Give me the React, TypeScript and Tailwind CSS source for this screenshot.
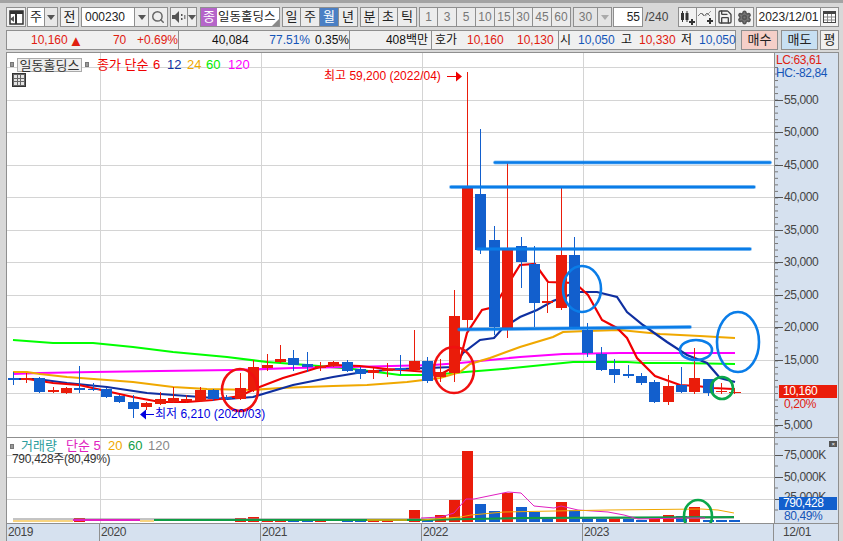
import React from "react";
import { Search, Save, Settings } from "lucide-react";

const RED = "#ea1c0a";
const BLUE = "#125fcd";

// [open-close top, bottom, wick top, wick bottom, color] in page pixels
const candles: [number, number, number, number, string][] = [
  [378, 380, 372, 385, BLUE], [378, 380, 373, 383, RED], [378, 392, 377, 393, BLUE], [390, 392, 387, 393, RED],
  [388, 393, 387, 394, RED], [388, 390, 366, 393, BLUE], [389, 390, 383, 391, BLUE], [389, 397, 388, 398, BLUE],
  [396, 402, 395, 403, BLUE], [402, 409, 395, 418, BLUE], [403, 407, 402, 410, RED], [399, 404, 392, 405, RED],
  [398, 402, 387, 403, RED], [399, 401, 395, 403, RED], [390, 401, 387, 402, RED], [390, 399, 389, 401, BLUE],
  [397, 399, 395, 400, BLUE], [388, 399, 373, 400, RED], [367, 390, 360, 392, RED], [365, 368, 354, 371, RED],
  [359, 362, 345, 363, RED], [358, 365, 350, 371, BLUE], [364, 367, 352, 372, BLUE], [366, 368, 362, 371, RED],
  [362, 366, 361, 367, RED], [362, 371, 360, 372, BLUE], [369, 374, 367, 379, BLUE], [370, 373, 368, 379, RED],
  [369, 371, 363, 377, RED], [368, 370, 355, 375, BLUE], [361, 370, 330, 371, RED], [361, 381, 357, 383, BLUE],
  [372, 377, 359, 382, RED], [316, 373, 290, 382, RED], [188, 320, 72, 332, RED], [194, 250, 129, 254, BLUE],
  [240, 327, 226, 335, BLUE], [250, 328, 163, 338, RED], [246, 262, 237, 288, BLUE], [264, 303, 246, 327, BLUE],
  [301, 303, 283, 313, RED], [255, 308, 188, 310, RED], [255, 327, 237, 328, BLUE], [330, 353, 323, 357, BLUE],
  [354, 370, 347, 371, BLUE], [369, 375, 359, 383, BLUE], [374, 376, 365, 378, BLUE], [376, 383, 373, 385, BLUE],
  [382, 402, 380, 403, BLUE], [386, 402, 375, 405, RED], [385, 392, 367, 393, BLUE], [378, 392, 348, 394, RED],
  [379, 393, 379, 396, BLUE], [391, 392, 383, 394, RED], [392, 393, 388, 394, RED],
];
const cx = (i: number) => Math.floor(13 + 13.37 * i);

const ma6 = "28,379 53,383 66,384 79,385 106,391 133,397 160,402 187,402 213,400 240,396 257,388 283,378 307,371 320,367 334,365 360,366 387,369 401,370 428,372 441,374 454,367 460,360 467,333 482,310 494,307 500,297 520,265 535,264 548,282 575,283 588,295 602,320 617,328 627,338 637,358 655,376 680,385 697,386 713,388 733,389";
const ma12 = "17,379 37,379 67,383 107,387 147,393 187,396 227,399 253,397 283,388 293,385 333,377 363,372 400,369 428,368 453,367 463,353 480,340 494,338 503,328 520,317 537,310 553,301 577,292 597,292 617,297 627,312 643,325 667,342 687,355 707,363 720,378 735,382";
const ma24 = "13,372 27,372 40,374 67,377 107,380 133,382 173,387 207,389 253,390 280,388 333,386 367,385 407,382 440,378 460,372 470,364 490,358 520,347 553,337 563,332 587,331 620,330 660,334 700,336 717,337 735,338";
const ma60 = "13,340 53,343 93,343 133,347 173,352 227,357 267,362 307,365 353,369 400,375 433,375 453,373 503,369 553,364 573,362 627,362 643,363 680,363 735,364";
const ma120 = "13,374 40,373 93,372 160,371 233,370 293,368 350,367 433,365 460,363 520,357 563,354 620,353 735,353";

// volume bars: index -> [top y, color]
const volBars: Record<number, [number, string]> = {
  5: [518, RED], 17: [518, RED], 18: [517, RED], 30: [510, RED], 31: [519, BLUE], 32: [515, RED], 33: [500, RED],
  34: [451, RED], 35: [504, BLUE], 36: [511, BLUE], 37: [493, RED], 38: [507, BLUE], 39: [512, BLUE], 40: [518, BLUE],
  41: [502, RED], 42: [510, BLUE], 43: [517, BLUE], 44: [519, BLUE], 45: [518, RED], 46: [519, BLUE], 47: [520, BLUE],
  48: [519, RED], 49: [515, RED], 50: [516, BLUE], 51: [507, RED], 52: [520, BLUE], 53: [520, BLUE], 54: [520, BLUE],
};

const priceTicks = [
  ["55,000", 100], ["50,000", 132], ["45,000", 165], ["40,000", 197], ["35,000", 230], ["30,000", 262],
  ["25,000", 295], ["20,000", 327], ["15,000", 360], ["5,000", 425],
] as const;

const FONT = "font-['Liberation_Sans','Noto_Sans_CJK_KR',sans-serif]";

function Btn({ w, children, className = "" }: { w: string; children?: React.ReactNode; className?: string }) {
  return (
    <div className={`${w} h-[20px] shrink-0 flex items-center justify-center border border-[#8f8f8f] text-[13px] text-[#222] ${className}`}>
      {children}
    </div>
  );
}

function Arrow({ color = "#555" }: { color?: string }) {
  return (
    <svg width="8" height="5" viewBox="0 0 8 5">
      <path d="M0 0h8L4 5z" fill={color} />
    </svg>
  );
}

function Toolbar() {
  return (
    <div className="flex items-center h-[20px] mt-[4px] pl-[6px]">
      <Btn w="w-[20px]" className="bg-[#f2f2f2]">
        <svg width="15" height="15" viewBox="0 0 15 15">
          <rect x="1" y="1" width="13" height="13" fill="#fff" stroke="#333" strokeWidth="1.5" />
          <rect x="1" y="1" width="13" height="3" fill="#333" />
          <rect x="6" y="4" width="2" height="10" fill="#333" />
          <path d="M5 6v6L1 9z" fill="#555" />
        </svg>
      </Btn>
      <Btn w="w-[18px]" className="ml-[1px] bg-white">주</Btn>
      <Btn w="w-[13px]" className="bg-[#e8e8e8] border-l-0"><Arrow /></Btn>
      <Btn w="w-[19px]" className="ml-[2px] bg-[#f2f2f2]">전</Btn>
      <Btn w="w-[54px]" className="ml-[2px] bg-white !justify-start pl-[3px] !text-[12px]">000230</Btn>
      <Btn w="w-[14px]" className="bg-[#eee] border-l-0"><Arrow /></Btn>
      <Btn w="w-[19px]" className="bg-[#eee] border-l-0"><Search size={14} color="#666" strokeWidth={2.5} /></Btn>
      <Btn w="w-[18px]" className="ml-[2px] bg-[#eee]">
        <svg width="14" height="12" viewBox="0 0 14 12">
          <path d="M0 4h3l4-4v12L3 8H0z" fill="#555" />
          <rect x="9" y="3" width="1.5" height="2" fill="#555" /><rect x="9" y="7" width="1.5" height="2" fill="#555" />
          <rect x="12" y="4" width="1.5" height="4" fill="#888" />
        </svg>
      </Btn>
      <Btn w="w-[9px]" className="bg-[#eee] border-l-0"><Arrow /></Btn>
      <div className="ml-[3px] w-[17px] h-[20px] shrink-0 bg-[#b565c9] text-white text-[13px] flex items-center justify-center border border-[#8f8f8f] border-r-0">종</div>
      <div className="relative w-[63px] h-[20px] shrink-0 bg-white border border-[#8f8f8f] border-l-0 text-[12.5px] text-[#222] flex items-center pl-[1px] whitespace-nowrap overflow-hidden">
        일동홀딩스
        <svg className="absolute right-0 bottom-0" width="7" height="7" viewBox="0 0 7 7"><path d="M7 0v7H0z" fill="#888" /></svg>
      </div>
      <Btn w="w-[19px]" className="ml-[2px] bg-[#ececec]">일</Btn>
      <Btn w="w-[19px]" className="bg-[#ececec] border-l-0">주</Btn>
      <Btn w="w-[19px]" className="bg-[#4a7fc4] border-l-0 !text-white">월</Btn>
      <Btn w="w-[19px]" className="bg-[#ececec] border-l-0">년</Btn>
      <Btn w="w-[19px]" className="ml-[2px] bg-[#ececec]">분</Btn>
      <Btn w="w-[19px]" className="bg-[#ececec] border-l-0">초</Btn>
      <Btn w="w-[19px]" className="bg-[#ececec] border-l-0">틱</Btn>
      <div className="ml-[2px] flex shrink-0">
        {["1", "3", "5", "10", "15", "30", "45", "60"].map((m) => (
          <Btn key={m} w="w-[19px]" className="bg-[#ececec] border-l-0 first:border-l !text-[#777] !text-[12px]">{m}</Btn>
        ))}
      </div>
      <Btn w="w-[25px]" className="ml-[2px] bg-[#e4e4e4] !text-[#777] !text-[12px]">30</Btn>
      <Btn w="w-[14px]" className="bg-[#e4e4e4] border-l-0"><Arrow color="#aaa" /></Btn>
      <Btn w="w-[30px]" className="ml-[1px] bg-white !justify-end pr-[2px] !text-[12px]">55</Btn>
      <span className="w-[35px] shrink-0 pl-[2px] text-[12px] text-[#444]">/240</span>
      <Btn w="w-[19px]" className="bg-[#f2f2f2]">
        <svg width="15" height="15" viewBox="0 0 15 15">
          <rect x="1" y="3" width="3" height="7" fill="#333" /><rect x="5.5" y="3" width="3" height="7" fill="#333" />
          <path d="M2.5 1v11M7 1v11" stroke="#333" />
          <path d="M12 9v6M9 12h6" stroke="#333" strokeWidth="2" />
        </svg>
      </Btn>
      <Btn w="w-[19px]" className="bg-[#f2f2f2] border-l-0">
        <svg width="16" height="15" viewBox="0 0 16 15">
          <path d="M0 6l3-3 3 3 3-3 3 3" fill="none" stroke="#777" />
          <path d="M4 3l3 3 3-2 3-3" fill="none" stroke="#999" />
          <path d="M12 8v6M9 11h6" stroke="#333" strokeWidth="2" />
        </svg>
      </Btn>
      <Btn w="w-[19px]" className="bg-[#f2f2f2] border-l-0"><Save size={16} color="#444" strokeWidth={2} /></Btn>
      <Btn w="w-[19px]" className="bg-[#f2f2f2] border-l-0"><Settings size={15} color="#555" fill="#777" strokeWidth={2.5} /></Btn>
      <Btn w="w-[65px]" className="ml-[2px] bg-white !text-[12px]">2023/12/01</Btn>
      <Btn w="w-[18px]" className="bg-[#f2f2f2] border-l-0">
        <svg width="13" height="12" viewBox="0 0 13 12">
          <rect x="0.5" y="0.5" width="12" height="11" fill="#fff" stroke="#444" />
          <rect x="0" y="0" width="13" height="3" fill="#444" />
          <path d="M4.5 3v8M8.5 3v8M1 6h11M1 9h11" stroke="#888" />
        </svg>
      </Btn>
    </div>
  );
}

function Cell({ w, children }: { w: string; children: React.ReactNode }) {
  return <div className={`${w} h-full shrink-0 relative flex items-center border-r border-[#8f8f8f] whitespace-nowrap`}>{children}</div>;
}

function InfoBar() {
  return (
    <div className="flex items-center h-[20px] mt-[3px] pl-[6px] text-[12px]">
      <div className="w-[730px] h-[20px] shrink-0 flex border border-[#8f8f8f] bg-[#f0f0f0]">
        <Cell w="w-[172px]">
          <span className="text-[#e02010] pl-[24px] w-[63px]">10,160</span>
          <span className="text-[#e02010] text-[15px] leading-[15px] w-[46px]">▲</span>
          <span className="text-[#e02010] w-[25px]">70</span>
          <span className="text-[#e02010]">+0.69%</span>
        </Cell>
        <Cell w="w-[171px]">
          <span className="text-[#111] pl-[33px] w-[92px]">40,084</span>
          <span className="text-[#1555b8] w-[47px]">77.51%</span>
          <span className="text-[#111]">0.35%</span>
        </Cell>
        <Cell w="w-[82px]">
          <span className="text-[#111] ml-auto pr-[3px]">408백만</span>
        </Cell>
        <Cell w="w-[127px]">
          <span className="text-[#111] pl-[3px] w-[35px]">호가</span>
          <span className="text-[#e02010] w-[50px]">10,160</span>
          <span className="text-[#e02010]">10,130</span>
        </Cell>
        <div className="flex items-center whitespace-nowrap">
          <span className="text-[#111] pl-[1px] w-[19px]">시</span>
          <span className="text-[#1555b8] w-[43px]">10,050</span>
          <span className="text-[#111] w-[18px]">고</span>
          <span className="text-[#e02010] w-[42px]">10,330</span>
          <span className="text-[#111] w-[18px]">저</span>
          <span className="text-[#1555b8]">10,050</span>
        </div>
      </div>
      <Btn w="w-[37px]" className="ml-[5px] bg-[#f5cfc8]">매수</Btn>
      <Btn w="w-[37px]" className="ml-[3px] bg-[#c7dff2]">매도</Btn>
      <Btn w="w-[19px]" className="ml-[2px] bg-[#f0f0f0]">평</Btn>
    </div>
  );
}

const MaLine = ({ pts, color, w = 2.2 }: { pts: string; color: string; w?: number }) => (
  <polyline points={pts} fill="none" stroke={color} strokeWidth={w} />
);

const Trend = ({ x1, y1, x2, y2 }: { x1: number; y1: number; x2: number; y2: number }) => (
  <g strokeLinecap="round">
    <line x1={x1} y1={y1} x2={x2} y2={y2} stroke="#0a7de8" strokeWidth="4" strokeOpacity="0.45" />
    <line x1={x1} y1={y1} x2={x2} y2={y2} stroke="#0a7de8" strokeWidth="2.4" />
  </g>
);

const Ring = ({ cx: x, cy, rx, ry, color }: { cx: number; cy: number; rx: number; ry: number; color: string }) => (
  <ellipse cx={x} cy={cy} rx={rx} ry={ry} fill="none" stroke={color} strokeWidth="2.6" />
);

function Grid({ ys, y1, y2 }: { ys: number[]; y1: number; y2: number }) {
  return (
    <g stroke="#d4d4d4">
      {ys.map((y) => <line key={y} x1="7" x2="774" y1={y + 0.5} y2={y + 0.5} />)}
      {[100, 261, 422, 583].map((x) => <line key={x} x1={x + 0.5} x2={x + 0.5} y1={y1} y2={y2} />)}
    </g>
  );
}

function PricePanel() {
  return (
    <div className="relative flex h-[384px]">
      <div className="relative w-[767px] shrink-0 bg-white overflow-hidden">
        <svg className="block" width="767" height="384" viewBox="7 53 767 384">
          <Grid ys={[67, 100, 132, 165, 197, 230, 262, 295, 327, 360, 393, 425]} y1={53} y2={437} />
          <MaLine pts={ma60} color="#00ff00" />
          <MaLine pts={ma120} color="#ff00ff" />
          <MaLine pts={ma24} color="#f0a800" />
          <MaLine pts={ma12} color="#0f2fa0" />
          <MaLine pts={ma6} color="#f00000" />
          {candles.map(([t, b, wt, wb, c], i) => (
            <g key={i} fill={c}>
              <rect x={cx(i)} y={wt} width="1" height={wb - wt} />
              <rect x={cx(i) - 5} y={t} width="11" height={Math.max(b - t, 1)} />
            </g>
          ))}
          <rect x="731" y="392" width="10" height="1" fill={RED} />
          <Trend x1={495} y1={162.5} x2={770} y2={162.5} />
          <Trend x1={451} y1={187} x2={754} y2={187} />
          <Trend x1={478} y1={249} x2={750} y2={249} />
          <Trend x1={459} y1={329.5} x2={690} y2={327} />
          <Ring cx={582} cy={289} rx={19} ry={23} color="#0a7de8" />
          <Ring cx={696} cy={350} rx={16} ry={10} color="#0a7de8" />
          <Ring cx={738} cy={342} rx={21} ry={30} color="#0a7de8" />
          <Ring cx={240} cy={390} rx={18} ry={21} color="#f01010" />
          <Ring cx={454} cy={370} rx={20} ry={23} color="#f01010" />
          <Ring cx={722} cy={388} rx={11} ry={11} color="#0aa84a" />
          <path d="M447 76.5h9" stroke="#f00000" />
          <path d="M462 76.5l-6-5v10z" fill="#f00000" />
          <path d="M154 414.5h-8" stroke="#0000e0" />
          <path d="M140 414.5l6-5v10z" fill="#0000e0" />
        </svg>

        <div className="absolute left-[3px] top-[2px] flex items-center text-[13px]">
          <span className="w-[4px] h-[5px] bg-[#999] border border-[#777]" />
          <span className="ml-[3px] w-[65px] h-[14px] leading-[13px] text-center bg-[#eee] border border-[#aaa] text-[#333]">일동홀딩스</span>
          <span className="ml-[3px] w-[4px] h-[5px] bg-[#999] border border-[#777]" />
          <span className="ml-[8px] w-[56px] text-[#f00000]">종가 단순</span>
          <span className="w-[14px] text-[#f00000]">6</span>
          <span className="w-[20px] text-[#0f2fa0]">12</span>
          <span className="w-[19px] text-[#f0a800]">24</span>
          <span className="w-[22px] text-[#00ee00]">60</span>
          <span className="text-[#ff00ff]">120</span>
        </div>
        <div className="absolute left-[5px] top-[20px] w-[14px] h-[14px] border border-[#333] bg-[#666] grid grid-cols-3 grid-rows-3 gap-px p-px">
          {Array.from({ length: 9 }).map((_, i) => <span key={i} className="bg-[#e4e4e4]" />)}
        </div>
        <span className="absolute left-[317px] top-[16px] text-[12px] leading-[14px] text-[#f00000] whitespace-nowrap">최고 59,200 (2022/04)</span>
        <span className="absolute left-[148px] top-[354px] text-[12px] leading-[14px] text-[#0000e0] whitespace-nowrap">최저 6,210 (2020/03)</span>
      </div>

      <div className="relative flex-1 bg-[#d6e1ef] border-l border-[#8f8f8f] text-[12px] tracking-[-0.4px] text-[#444]">
        <svg className="absolute left-0 top-0" width="9" height="384" viewBox="0 53 9 384">
          {Array.from({ length: 57 }).map((_, i) => (
            <line key={i} x1="0" x2="3" y1={67.5 + i * 6.52} y2={67.5 + i * 6.52} stroke="#777" />
          ))}
          {priceTicks.map(([l, y]) => <line key={l} x1="0" x2="8" y1={y + 0.5} y2={y + 0.5} stroke="#555" />)}
        </svg>
        <span className="absolute left-[1px] top-[1px] text-[#e02010] leading-[12px]">LC:63,61</span>
        <span className="absolute left-[1px] top-[14px] text-[#1555b8] leading-[12px]">HC:-82,84</span>
        {priceTicks.map(([l, y]) => (
          <span key={l} className="absolute left-[9px] leading-[14px]" style={{ top: y - 53 - 7 }}>{l}</span>
        ))}
        <span className="absolute left-[4px] top-[332px] w-[58px] h-[13px] leading-[13px] pl-[4px] bg-[#ea1c0a] text-white">10,160</span>
        <span className="absolute left-[9px] top-[344px] leading-[14px] text-[#e02010]">0,20%</span>
      </div>
    </div>
  );
}

function VolumePanel() {
  const base = 522;
  return (
    <div className="relative flex h-[86px] border-t border-[#8f8f8f]">
      <div className="relative w-[767px] shrink-0 bg-white overflow-hidden">
        <svg className="block" width="767" height="85" viewBox="7 438 767 85">
          <Grid ys={[455, 477, 499]} y1={438} y2={523} />
          {Object.entries(volBars).map(([k, [t, c]]) => (
            <rect key={k} x={cx(Number(k)) - 5} y={t} width="11" height={base - t} fill={c} />
          ))}
          {[19, 20, 21, 22, 23, 25, 26, 27, 28].map((i) => (
            <rect key={i} x={cx(i) - 5} y="521" width="11" height="1" fill={candles[i][4]} />
          ))}
          <polyline points="13,519 421,519 734,518" fill="none" stroke="#888" strokeWidth="1" />
          <polyline points="13,521 73,521" fill="none" stroke="#f0a800" strokeWidth="1" />
          <polyline points="140,521 154,521" fill="none" stroke="#f0a800" strokeWidth="1" />
          <polyline points="73,520 140,520" fill="none" stroke="#e020c0" strokeWidth="2" />
          <polyline points="154,520 421,520 521,518 734,517" fill="none" stroke="#0f9d45" strokeWidth="2" />
          <polyline points="367,520 407,520" fill="none" stroke="#f0a800" strokeWidth="1.5" />
          <polyline points="421,518 441,517 454,513 466,499 474,499 508,492 521,493 534,506 554,508 561,506 578,510 608,512 624,515 638,519 688,518 705,518" fill="none" stroke="#e020c0" strokeWidth="1" />
          <polyline points="421,520 461,517 471,515 504,512 554,511 608,510 701,509 718,510 734,513" fill="none" stroke="#f0a800" strokeWidth="1" />
          <Ring cx={698} cy={516} rx={14} ry={16} color="#0aa84a" />
        </svg>
        <div className="absolute left-[3px] top-[1px] flex items-center text-[13px] leading-[14px] whitespace-nowrap">
          <span className="w-[4px] h-[5px] bg-[#999] border border-[#777]" />
          <span className="ml-[7px] w-[45px] text-[#2a9d9d]">거래량</span>
          <span className="w-[42px] text-[#e020c0]">단순 5</span>
          <span className="w-[20px] text-[#f0a800]">20</span>
          <span className="w-[20px] text-[#0f9d45]">60</span>
          <span className="text-[#888]">120</span>
        </div>
        <span className="absolute left-[5px] top-[14px] text-[12px] tracking-[-0.3px] leading-[14px] text-[#333] whitespace-nowrap">790,428주(80,49%)</span>
      </div>
      <div className="relative flex-1 bg-[#d6e1ef] border-l border-[#8f8f8f] text-[12px] tracking-[-0.4px] text-[#444]">
        <svg className="absolute left-0 top-0" width="9" height="85" viewBox="0 438 9 85">
          {[444, 466, 488, 510].map((y) => <line key={y} x1="0" x2="3" y1={y} y2={y} stroke="#777" />)}
          {[455, 477, 499].map((y) => <line key={y} x1="0" x2="8" y1={y + 0.5} y2={y + 0.5} stroke="#555" />)}
        </svg>
        <span className="absolute left-[54px] top-[3px] w-[8px] h-[6px] bg-[#555] text-white text-[6px] leading-[6px] text-center">×</span>
        <span className="absolute left-[9px] top-[10px] leading-[14px]">75,000K</span>
        <span className="absolute left-[9px] top-[32px] leading-[14px]">50,000K</span>
        <span className="absolute left-[9px] top-[52px] leading-[14px]">25,000K</span>
        <span className="absolute left-[4px] top-[59px] w-[58px] h-[13px] leading-[13px] pl-[4px] bg-[#125fcd] text-white">790,428</span>
        <span className="absolute left-[9px] top-[72px] leading-[12px] text-[#1555b8]">80,49%</span>
      </div>
    </div>
  );
}

function XAxis() {
  const years: [string, string][] = [["2019", "w-[93px]"], ["2020", "w-[161px]"], ["2021", "w-[161px]"], ["2022", "w-[161px]"], ["2023", "w-[191px]"]];
  return (
    <div className="flex h-[18px] border-t border-[#8f8f8f] bg-[#d6e1ef] text-[12px] tracking-[-0.4px] text-[#444]">
      {years.map(([y, w]) => (
        <span key={y} className={`${w} shrink-0 h-full pl-[1px] leading-[17px] border-r border-[#8f8f8f]`}>{y}</span>
      ))}
      <span className="pl-[9px] leading-[17px]">12/01</span>
    </div>
  );
}

export default function App() {
  return (
    <div className={`w-[843px] h-[541px] overflow-hidden bg-[#d8d8d8] border-t-[3px] border-[#a3a3a3] ${FONT}`}>
      <Toolbar />
      <InfoBar />
      <div className="ml-[6px] mr-[4px] mt-[2px] border-l border-r border-t border-[#8f8f8f]">
        <PricePanel />
        <VolumePanel />
        <XAxis />
      </div>
    </div>
  );
}
